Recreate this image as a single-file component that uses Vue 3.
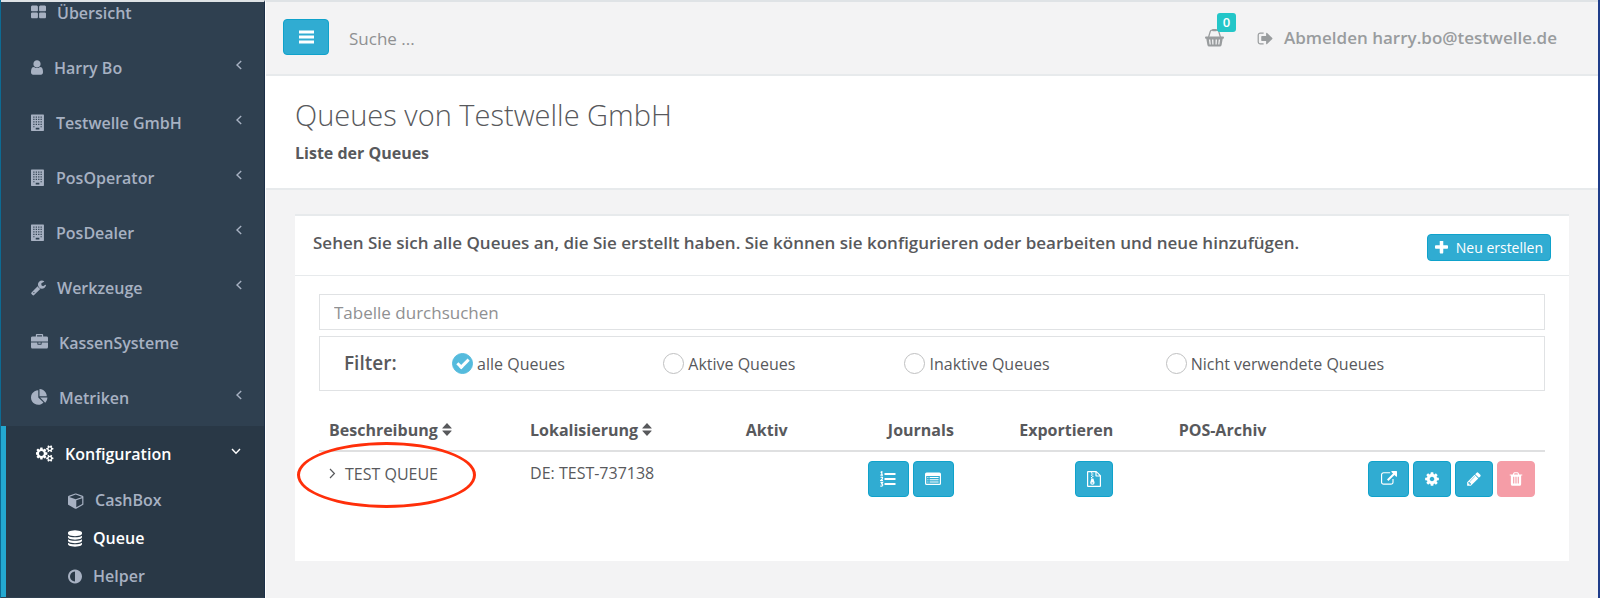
<script setup>
import { ref } from 'vue'

const icons = {
  grid: { w: 1664, x: 64, d: 'M832 1024v384q0 52-38 90t-90 38h-512q-52 0-90-38t-38-90v-384q0-52 38-90t90-38h512q52 0 90 38t38 90zm0-768v384q0 52-38 90t-90 38h-512q-52 0-90-38t-38-90v-384q0-52 38-90t90-38h512q52 0 90 38t38 90zm896 768v384q0 52-38 90t-90 38h-512q-52 0-90-38t-38-90v-384q0-52 38-90t90-38h512q52 0 90 38t38 90zm0-768v384q0 52-38 90t-90 38h-512q-52 0-90-38t-38-90v-384q0-52 38-90t90-38h512q52 0 90 38t38 90z' },
  user: { w: 1280, x: 256, d: 'M1536 1399q0 109-62.5 187t-150.5 78h-854q-88 0-150.5-78t-62.5-187q0-85 8.5-160.5t31.5-152 58.5-131 94-89 134.5-34.5q131 128 313 128t313-128q76 0 134.5 34.5t94 89 58.5 131 31.5 152 8.5 160.5zm-256-887q0 159-112.5 271.5t-271.5 112.5-271.5-112.5-112.5-271.5 112.5-271.5 271.5-112.5 271.5 112.5 112.5 271.5z' },
  building: { w: 1480, x: 0, d: 'M64 60H1304Q1368 60 1368 124V1728Q1368 1792 1304 1792H64Q0 1792 0 1728V124Q0 60 64 60ZM240 256v128h128v-128ZM500 256v128h128v-128ZM760 256v128h128v-128ZM1010 256v128h128v-128ZM240 512v128h128v-128ZM500 512v128h128v-128ZM760 512v128h128v-128ZM1010 512v128h128v-128ZM240 768v128h128v-128ZM500 768v128h128v-128ZM760 768v128h128v-128ZM1010 768v128h128v-128ZM240 1024v128h128v-128ZM500 1024v128h128v-128ZM760 1024v128h128v-128ZM1010 1024v128h128v-128ZM240 1280v128h128v-128ZM1010 1280v128h128v-128ZM500 1440v190h384v-190Z' },
  wrench: { w: 1664, x: 64, d: 'M448 1472q0-26-19-45t-45-19-45 19-19 45 19 45 45 19 45-19 19-45zm644-420l-682 682q-37 37-90 37-52 0-91-37l-106-108q-38-36-38-90 0-53 38-91l681-681q39 98 114.5 173.5t173.5 114.5zm634-435q0 39-23 106-47 134-164.5 217.5t-258.5 83.5q-185 0-316.5-131.5t-131.5-316.5 131.5-316.5 316.5-131.5q58 0 121.5 16.5t107.5 46.5q16 11 16 28t-16 28l-293 169v224l193 107q5-3 79-48.5t135.5-81 70.5-35.5q15 0 23.5 10t8.5 25z' },
  briefcase: { w: 1792, x: 0, d: 'M640 256h512v-128h-512v128zm1152 640v480q0 66-47 113t-113 47h-1472q-66 0-113-47t-47-113v-480h672v160q0 26 19 45t45 19h320q26 0 45-19t19-45v-160h672zm-768 0v128h-256v-128h256zm768-480v384h-1792v-384q0-66 47-113t113-47h352v-160q0-40 28-68t68-28h576q40 0 68 28t28 68v160h352q66 0 113 47t47 113z' },
  pie: { w: 1792, x: 0, d: 'M768 890l546 546q-106 108-247.5 168t-298.5 60q-209 0-385.5-103t-279.5-279.5-103-385.5 103-385.5 279.5-279.5 385.5-103v762zm187 6h773q0 157-60 298.5t-168 247.5zm709-128h-768v-768q209 0 385.5 103t279.5 279.5 103 385.5z' },
  cogs: { w: 1920, x: 0, d: 'M832 896q0-106-75-181t-181-75-181 75-75 181 75 181 181 75 181-75 75-181zm768 512q0-52-38-90t-90-38-90 38-38 90q0 53 37.5 90.5t90.5 37.5 90.5-37.5 37.5-90.5zm0-1024q0-52-38-90t-90-38-90 38-38 90q0 53 37.5 90.5t90.5 37.5 90.5-37.5 37.5-90.5zm-384 421v185q0 10-7 19.5t-16 10.5l-155 24q-11 35-32 76 34 48 90 115 7 11 7 20 0 12-7 19-23 30-82.5 89.5t-78.5 59.5q-11 0-21-7l-115-90q-37 19-77 31-11 108-23 155-7 24-30 24h-186q-11 0-20-7.5t-10-17.5l-23-153q-34-10-75-31l-118 89q-7 7-20 7-11 0-21-8-144-133-144-160 0-9 7-19 10-14 41-53t47-61q-23-44-35-82l-152-24q-10-1-17-9.5t-7-19.5v-185q0-10 7-19.5t16-10.5l155-24q11-35 32-76-34-48-90-115-7-11-7-20 0-12 7-20 22-30 82-89t79-59q11 0 21 7l115 90q34-18 77-32 11-108 23-154 7-24 30-24h186q11 0 20 7.5t10 17.5l23 153q34 10 75 31l118-89q8-7 20-7 11 0 21 8 144 133 144 160 0 8-7 19-12 16-42 54t-45 60q23 48 34 82l152 23q10 2 17 10.5t7 19.5zm640 533v140q0 16-149 31-12 27-30 52 51 113 51 138 0 4-4 7-122 71-124 71-8 0-46-47t-52-68q-20 2-30 2t-30-2q-14 21-52 68t-46 47q-2 0-124-71-4-3-4-7 0-25 51-138-18-25-30-52-149-15-149-31v-140q0-16 149-31 13-29 30-52-51-113-51-138 0-4 4-7 4-2 35-20t59-34 30-16q8 0 46 46.5t52 67.5q20-2 30-2t30 2q51-71 92-112l6-2q4 0 124 70 4 3 4 7 0 25-51 138 17 23 30 52 149 15 149 31zm0-1024v140q0 16-149 31-12 27-30 52 51 113 51 138 0 4-4 7-122 71-124 71-8 0-46-47t-52-68q-20 2-30 2t-30-2q-14 21-52 68t-46 47q-2 0-124-71-4-3-4-7 0-25 51-138-18-25-30-52-149-15-149-31v-140q0-16 149-31 13-29 30-52-51-113-51-138 0-4 4-7 4-2 35-20t59-34 30-16q8 0 46 46.5t52 67.5q20-2 30-2t30 2q51-71 92-112l6-2q4 0 124 70 4 3 4 7 0 25-51 138 17 23 30 52 149 15 149 31z' },
  cube: { w: 1728, x: 0, d: 'M896 1629l640-349v-636l-640 233v752zm-64-865l698-254-698-254-698 254zm832-252v768q0 35-18 65t-49 47l-704 384q-28 16-61 16t-61-16l-704-384q-31-17-49-47t-18-65v-768q0-40 23-73t61-47l704-256q22-8 44-8t44 8l704 256q38 14 61 47t23 73z' },
  database: { w: 1536, x: 128, d: 'M896 768q237 0 443-43t325-127v170q0 69-103 128t-280 93.5-385 34.5-385-34.5-280-93.5-103-128v-170q119 84 325 127t443 43zm0 768q237 0 443-43t325-127v170q0 69-103 128t-280 93.5-385 34.5-385-34.5-280-93.5-103-128v-170q119 84 325 127t443 43zm0-384q237 0 443-43t325-127v170q0 69-103 128t-280 93.5-385 34.5-385-34.5-280-93.5-103-128v-170q119 84 325 127t443 43zm0-1152q208 0 385 34.5t280 93.5 103 128v128q0 69-103 128t-280 93.5-385 34.5-385-34.5-280-93.5-103-128v-128q0-69 103-128t280-93.5 385-34.5z' },
  adjust: { w: 1536, x: 128, d: 'M896 1440v-1088q-148 0-273 73t-198 198-73 273 73 273 198 198 273 73zm768-544q0 209-103 385.5t-279.5 279.5-385.5 103-385.5-103-279.5-279.5-103-385.5 103-385.5 279.5-279.5 385.5-103 385.5 103 279.5 279.5 103 385.5z' },
}

const viewBox = (name) => `${icons[name].x} 0 ${icons[name].w} 1792`
const iconWidth = (name) => Math.floor((icons[name].w / 1792) * 17)

const nav = [
  { label: 'Übersicht', icon: 'grid', more: false },
  { label: 'Harry Bo', icon: 'user', more: true },
  { label: 'Testwelle GmbH', icon: 'building', more: true },
  { label: 'PosOperator', icon: 'building', more: true },
  { label: 'PosDealer', icon: 'building', more: true },
  { label: 'Werkzeuge', icon: 'wrench', more: true },
  { label: 'KassenSysteme', icon: 'briefcase', more: false },
  { label: 'Metriken', icon: 'pie', more: true },
]

const subNav = [
  { label: 'CashBox', icon: 'cube', active: false },
  { label: 'Queue', icon: 'database', active: true },
  { label: 'Helper', icon: 'adjust', active: false },
]

const filters = [
  { value: 'all', label: 'alle Queues' },
  { value: 'active', label: 'Aktive Queues' },
  { value: 'inactive', label: 'Inaktive Queues' },
  { value: 'unused', label: 'Nicht verwendete Queues' },
]
const filter = ref('all')
const globalSearch = ref('')
const tableSearch = ref('')
</script>

<template>
  <div class="app">
    <aside class="sidebar">
      <nav class="menu" aria-label="Hauptmenü">
        <a v-for="item in nav" :key="item.label" class="item" href="#">
          <svg class="item-icon" :width="iconWidth(item.icon)" height="17" :viewBox="viewBox(item.icon)" aria-hidden="true">
            <path :d="icons[item.icon].d" fill-rule="evenodd" />
          </svg>
          <span>{{ item.label }}</span>
          <svg v-if="item.more" class="arrow" width="8" height="10" viewBox="0 0 8 10" aria-hidden="true">
            <path d="M6.2 1 L2 5 L6.2 9" />
          </svg>
        </a>
        <div class="group">
          <a class="item current" href="#">
            <svg class="item-icon" :width="iconWidth('cogs')" height="17" :viewBox="viewBox('cogs')" aria-hidden="true">
              <path :d="icons.cogs.d" fill-rule="evenodd" />
            </svg>
            <span>Konfiguration</span>
            <svg class="arrow" width="10" height="8" viewBox="0 0 10 8" aria-hidden="true">
              <path d="M1 2 L5 6.2 L9 2" />
            </svg>
          </a>
          <a v-for="item in subNav" :key="item.label" class="sub-item" :class="{ current: item.active }" href="#">
            <svg class="item-icon" :width="iconWidth(item.icon)" height="17" :viewBox="viewBox(item.icon)" aria-hidden="true">
              <path :d="icons[item.icon].d" fill-rule="evenodd" />
            </svg>
            <span>{{ item.label }}</span>
          </a>
        </div>
      </nav>
    </aside>

    <div class="main">
      <header class="topbar">
        <button class="btn toggle" type="button" aria-label="Menü umschalten">
          <svg width="15" height="14" viewBox="0 0 15 14" aria-hidden="true">
            <path d="M0 .5h15v3H0zM0 5.5h15v3H0zM0 10.5h15v3H0z" />
          </svg>
        </button>
        <input v-model="globalSearch" class="global-search" type="text" placeholder="Suche ..." aria-label="Suche">
        <a class="basket" href="#" aria-label="Warenkorb">
          <svg width="19" height="18" viewBox="0 0 19 18" aria-hidden="true">
            <path d="M3.6 8 L5.2 2.6 Q5.6 1.2 7 1.2 H12 Q13.4 1.2 13.8 2.6 L15.4 8" fill="none" stroke="currentColor" stroke-width="1.3" />
            <rect x="7" y="0" width="5" height="2.2" rx="1" />
            <path fill-rule="evenodd" d="M1 7.6H18Q19 7.6 19 8.7T18 9.8H17.7L16.6 16Q16.3 17.6 14.8 17.6H4.2Q2.7 17.6 2.4 16L1.3 9.8H1Q0 9.8 0 8.7T1 7.6ZM3.9 10.6L4.6 15.4H5.8L5.3 10.6ZM7 10.6L7.3 15.4H8.5L8.4 10.6ZM10.6 10.6L10.5 15.4H11.7L12 10.6ZM13.7 10.6L13.2 15.4H14.4L15.1 10.6Z" />
          </svg>
          <span class="badge">0</span>
        </a>
        <a class="logout" href="#">
          <svg width="17" height="17" viewBox="64 0 1664 1792" aria-hidden="true">
            <path d="M704 1440q0 4 1 20t.5 26.5-3 23.5-10 19.5-20.5 6.5h-320q-119 0-203.5-84.5t-84.5-203.5v-704q0-119 84.5-203.5t203.5-84.5h320q13 0 22.5 9.5t9.5 22.5q0 4 1 20t.5 26.5-3 23.5-10 19.5-20.5 6.5h-320q-66 0-113 47t-47 113v704q0 66 47 113t113 47h312l11.5 1 11.5 3 8 5.5 7 9 2 13.5zm928-544q0 26-19 45l-544 544q-19 19-45 19t-45-19-19-45v-288h-448q-26 0-45-19t-19-45v-384q0-26 19-45t45-19h448v-288q0-26 19-45t45-19 45 19l544 544q19 19 19 45z" />
          </svg>
          <span>Abmelden harry.bo@testwelle.de</span>
        </a>
      </header>

      <div class="heading">
        <h1>Queues von Testwelle GmbH</h1>
        <strong>Liste der Queues</strong>
      </div>

      <main class="content">
        <section class="card">
          <div class="card-title">
            <h2>Sehen Sie sich alle Queues an, die Sie erstellt haben. Sie können sie konfigurieren oder bearbeiten und neue hinzufügen.</h2>
            <button class="btn create" type="button">
              <svg width="13" height="13" viewBox="192 192 1408 1408" aria-hidden="true">
                <path d="M1600 736v192q0 40-28 68t-68 28h-416v416q0 40-28 68t-68 28h-192q-40 0-68-28t-28-68v-416h-416q-40 0-68-28t-28-68v-192q0-40 28-68t68-28h416v-416q0-40 28-68t68-28h192q40 0 68 28t28 68v416h416q40 0 68 28t28 68z" />
              </svg>
              <span>Neu erstellen</span>
            </button>
          </div>
          <div class="card-body">
            <input v-model="tableSearch" class="table-search" type="text" placeholder="Tabelle durchsuchen" aria-label="Tabelle durchsuchen">
            <div class="filters" role="radiogroup" aria-labelledby="filter-title">
              <span id="filter-title" class="filter-title">Filter:</span>
              <label v-for="f in filters" :key="f.value" class="filter">
                <input v-model="filter" type="radio" name="queue-filter" :value="f.value">
                <span>{{ f.label }}</span>
              </label>
            </div>
            <table>
              <colgroup>
                <col class="c-name"><col class="c-loc"><col class="c-active"><col class="c-journals"><col class="c-export"><col class="c-pos"><col>
              </colgroup>
              <thead>
                <tr>
                  <th v-for="title in ['Beschreibung', 'Lokalisierung']" :key="title">
                    {{ title }}
                    <svg class="sort" width="10" height="13" viewBox="0 0 10 13" aria-hidden="true">
                      <path d="M5 0 L9.6 5 Q10 5.6 9.2 5.6 H.8 Q0 5.6 .4 5 ZM5 13 L9.6 8 Q10 7.4 9.2 7.4 H.8 Q0 7.4 .4 8 Z" />
                    </svg>
                  </th>
                  <th>Aktiv</th>
                  <th class="right">Journals</th>
                  <th class="right">Exportieren</th>
                  <th class="center">POS-Archiv</th>
                  <th></th>
                </tr>
              </thead>
              <tbody>
                <tr>
                  <td>
                    <span class="queue">
                      <svg width="7" height="11" viewBox="0 0 7 11" aria-hidden="true">
                        <path d="M1 1 L5.4 5.5 L1 10" fill="none" stroke="currentColor" stroke-width="1.2" />
                      </svg>
                      <span>TEST QUEUE</span>
                      <span class="marker"></span>
                    </span>
                  </td>
                  <td>DE: TEST-737138</td>
                  <td></td>
                  <td>
                    <div class="actions">
                      <button class="btn wide" type="button" aria-label="Journal">
                        <svg width="16" height="16" viewBox="0 0 16 16" aria-hidden="true">
                          <path d="M4.5 2h11v2h-11zM4.5 7h11v2h-11zM4.5 12h11v2h-11z" />
                          <path d="M.6 1.4 L1.8 .7 V4 M.4 4.2 H3 M.6 6.5 Q2.6 5.4 2.6 7 Q2.4 8 .8 9.4 H3 M.5 11.4 H2.6 L1.6 12.8 Q3 13 2.6 14.4 Q2 15.6 .4 14.9" fill="none" stroke="currentColor" stroke-width="1.2" />
                        </svg>
                      </button>
                      <button class="btn wide" type="button" aria-label="Liste">
                        <svg width="16" height="14" viewBox="0 0 16 14" aria-hidden="true">
                          <path fill-rule="evenodd" d="M1.6 .5H14.4Q16 .5 16 2.1V11.4Q16 13 14.4 13H1.6Q0 13 0 11.4V2.1Q0 .5 1.6 .5ZM1.2 4V11.3Q1.2 11.8 1.7 11.8H14.3Q14.8 11.8 14.8 11.3V4Z" />
                          <path d="M2.4 5h1v1h-1zM2.4 7.3h1v1h-1zM2.4 9.6h1v1h-1zM4.6 5h9v1h-9zM4.6 7.3h9v1h-9zM4.6 9.6h9v1h-9z" />
                        </svg>
                      </button>
                    </div>
                  </td>
                  <td>
                    <div class="actions">
                      <button class="btn" type="button" aria-label="Exportieren">
                        <svg width="14" height="16" viewBox="0 0 14 16" aria-hidden="true">
                          <path fill-rule="evenodd" d="M1 0H9.4L14 4.6V15Q14 16 13 16H1Q0 16 0 15V1Q0 0 1 0ZM1.2 1.2V14.8H12.8V5.6H9.2Q8.4 5.6 8.4 4.8V1.2ZM9.6 1.6V4.4H12.4Z" />
                          <path d="M4 1.2h1.2v1.2H4zM5.2 2.4h1.2v1.2H5.2zM4 3.6h1.2v1.2H4zM5.2 4.8h1.2V6H5.2zM4 6h1.2v1.2H4z" />
                          <path fill-rule="evenodd" d="M4.4 7.4H6.4L7.6 11.6Q7.8 13.8 5.4 13.8T3.2 11.6ZM4.6 11.4V12.5H6.2V11.4Z" />
                        </svg>
                      </button>
                    </div>
                  </td>
                  <td></td>
                  <td>
                    <div class="actions row-actions">
                      <button class="btn wide" type="button" aria-label="Öffnen">
                        <svg width="16" height="16" viewBox="0 0 1792 1792" aria-hidden="true">
                          <path d="M1408 928v320q0 119-84.5 203.5t-203.5 84.5h-832q-119 0-203.5-84.5t-84.5-203.5v-832q0-119 84.5-203.5t203.5-84.5h704q14 0 23 9t9 23v64q0 14-9 23t-23 9h-704q-66 0-113 47t-47 113v832q0 66 47 113t113 47h832q66 0 113-47t47-113v-320q0-14 9-23t23-9h64q14 0 23 9t9 23zm384-864v512q0 26-19 45t-45 19-45-19l-176-176-652 652q-10 10-23 10t-23-10l-114-114q-10-10-10-23t10-23l652-652-176-176q-19-19-19-45t19-45 45-19h512q26 0 45 19t19 45z" />
                        </svg>
                      </button>
                      <button class="btn" type="button" aria-label="Einstellungen">
                        <svg width="16" height="16" viewBox="0 0 1792 1792" aria-hidden="true">
                          <path d="M1152 896q0-106-75-181t-181-75-181 75-75 181 75 181 181 75 181-75 75-181zm512-109v222q0 12-8 23t-20 13l-185 28q-19 54-39 91 35 50 107 138 10 12 10 25t-9 23q-27 37-99 108t-94 71q-12 0-26-9l-138-108q-44 23-91 38-16 136-29 186-7 28-36 28h-222q-14 0-24.5-8.5t-11.5-21.5l-28-184q-49-16-90-37l-141 107q-10 9-25 9-14 0-25-11-126-114-165-168-7-10-7-23 0-12 8-23 15-21 51-66.5t54-70.5q-27-50-41-99l-183-27q-13-2-21-12.5t-8-23.5v-222q0-12 8-23t19-13l186-28q14-46 39-92-40-57-107-138-10-12-10-24 0-10 9-23 26-36 98.5-107.5t94.5-71.5q13 0 26 10l138 107q44-23 91-38 16-136 29-186 7-28 36-28h222q14 0 24.5 8.5t11.5 21.5l28 184q49 16 90 37l142-107q9-9 24-9 13 0 25 10 129 119 165 170 7 8 7 22 0 12-8 23-15 21-51 66.5t-54 70.5q26 50 41 98l183 28q13 2 21 12.5t8 23.5z" />
                        </svg>
                      </button>
                      <button class="btn" type="button" aria-label="Bearbeiten">
                        <svg width="16" height="16" viewBox="0 0 1792 1792" aria-hidden="true">
                          <path d="M491 1536l91-91-235-235-91 91v107h128v128h107zm523-928q0-22-22-22-10 0-17 7l-542 542q-7 7-7 17 0 22 22 22 10 0 17-7l542-542q7-7 7-17zm-54-192l416 416-832 832h-416v-416zm683 96q0 53-37 90l-166 166-416-416 166-165q36-38 90-38 53 0 91 38l235 234q37 39 37 91z" />
                        </svg>
                      </button>
                      <button class="btn danger" type="button" aria-label="Löschen">
                        <svg width="16" height="16" viewBox="0 0 1792 1792" aria-hidden="true">
                          <path d="M704 1376v-704q0-14-9-23t-23-9h-64q-14 0-23 9t-9 23v704q0 14 9 23t23 9h64q14 0 23-9t9-23zm256 0v-704q0-14-9-23t-23-9h-64q-14 0-23 9t-9 23v704q0 14 9 23t23 9h64q14 0 23-9t9-23zm256 0v-704q0-14-9-23t-23-9h-64q-14 0-23 9t-9 23v704q0 14 9 23t23 9h64q14 0 23-9t9-23zm-544-992h448l-48-117q-7-9-17-11h-317q-10 2-17 11zm928 32v64q0 14-9 23t-23 9h-96v948q0 83-47 143.5t-113 60.5h-832q-66 0-113-58.5t-47-141.5v-952h-96q-14 0-23-9t-9-23v-64q0-14 9-23t23-9h309l70-167q15-37 54-63t79-26h320q40 0 79 26t54 63l70 167h309q14 0 23 9t9 23z" />
                        </svg>
                      </button>
                    </div>
                  </td>
                </tr>
              </tbody>
            </table>
          </div>
        </section>
      </main>
    </div>
  </div>
</template>

<style>
body {
  margin: 0;
  background: #f3f3f4;
}
</style>

<style scoped>
.app {
  display: flex;
  box-sizing: border-box;
  min-height: 100vh;
  border-left: 1px solid #0d6b93;
  border-right: 2px solid #1f3d8a;
  background: #f3f3f4;
  color: #58595c;
  font-family: "Open Sans", "Noto Sans", sans-serif;
  font-size: 16px;
  line-height: 24px;
}
svg {
  flex: none;
  fill: currentColor;
}
a {
  color: inherit;
  text-decoration: none;
}
input,
button {
  font: inherit;
}

.sidebar {
  flex: none;
  box-sizing: border-box;
  width: 264px;
  overflow: hidden;
  border-top: 2px solid #dfe3e6;
  border-right: 1px solid #1c2f47;
  background: #2f4050;
}
.menu {
  margin-top: -17px;
}
.item,
.sub-item {
  display: flex;
  align-items: center;
  gap: 11px;
  box-sizing: border-box;
  color: #a7b1c2;
  font-weight: 600;
}
.item {
  height: 55px;
  padding: 0 21px 0 30px;
}
.sub-item {
  height: 38px;
  padding-left: 62px;
}
.group {
  margin-top: 1px;
  padding-bottom: 2px;
  border-left: 5px solid #23a8d0;
  background: #293846;
}
.group .item {
  padding-right: 23px;
}
.current {
  color: #fff;
}
.arrow {
  margin: 0 0 6px auto;
  fill: none;
  stroke: currentColor;
  stroke-width: 1.4;
}

.main {
  flex: 1;
  min-width: 0;
  border-top: 2px solid #dfe3e6;
  border-left: 1px solid #fff;
}
.topbar {
  display: flex;
  align-items: center;
  box-sizing: border-box;
  height: 74px;
  padding: 0 41px 2px 17px;
  border-bottom: 2px solid #e7eaec;
  color: #999c9e;
  font-weight: 600;
}
.btn {
  display: inline-flex;
  align-items: center;
  justify-content: center;
  box-sizing: border-box;
  width: 38px;
  height: 36px;
  padding: 0;
  border: 1px solid #0fa2cb;
  border-radius: 4px;
  background: #30acd2;
  color: #fff;
}
.btn.wide {
  width: 41px;
}
.btn.toggle {
  width: 46px;
}
.btn.danger {
  border-color: #f59da7;
  background: #f59da7;
}
.global-search {
  flex: 1;
  min-width: 0;
  margin: 0 20px;
  padding: 4px 0 0;
  border: 0;
  outline: 0;
  background: transparent;
  color: #58595c;
  font-size: 17px;
  font-weight: 400;
}
.global-search::placeholder,
.table-search::placeholder {
  color: #8f9092;
  opacity: 1;
}
.basket {
  position: relative;
  display: flex;
  margin-right: 33px;
  padding-top: 2px;
}
.badge {
  position: absolute;
  left: 12px;
  bottom: 15px;
  width: 19px;
  height: 19px;
  border-radius: 3px;
  background: #23c6c8;
  color: #fff;
  font-size: 13px;
  line-height: 19px;
  text-align: center;
}
.logout {
  display: flex;
  align-items: center;
  gap: 10px;
  padding-top: 2px;
  font-size: 17px;
}

.heading {
  padding: 19px 29px 23px;
  border-bottom: 2px solid #e7eaec;
  background: #fff;
}
.heading h1 {
  margin: 0 0 6px;
  font-size: 29px;
  font-weight: 300;
  line-height: 40px;
}
.heading strong {
  display: block;
  font-weight: 700;
}

.content {
  padding: 24px 29px 36px;
}
.card {
  border-top: 2px solid #e7eaec;
  background: #fff;
}
.card-title {
  display: flex;
  align-items: flex-start;
  justify-content: space-between;
  box-sizing: border-box;
  min-height: 60px;
  padding: 15px 18px 0;
  border-bottom: 1px solid #e7eaec;
}
.card-title h2 {
  margin: 0;
  font-size: 17px;
  font-weight: 600;
  line-height: 24px;
}
.btn.create {
  flex: none;
  gap: 8px;
  width: auto;
  height: 27px;
  margin-top: 3px;
  padding: 0 7px;
  font-size: 14px;
}
.card-body {
  padding: 18px 24px 64px;
}
.table-search {
  display: block;
  box-sizing: border-box;
  width: 100%;
  height: 36px;
  padding: 0 14px;
  border: 1px solid #e0e2e4;
  outline: 0;
  background: #fff;
  color: #58595c;
  font-size: 17px;
}
.filters {
  display: grid;
  grid-template-columns: 108fr 211fr 241fr 261fr 378fr;
  align-items: center;
  box-sizing: border-box;
  height: 55px;
  margin-top: 6px;
  padding-left: 24px;
  border: 1px solid #e0e2e4;
}
.filter-title {
  padding-bottom: 2px;
  font-size: 19px;
  font-weight: 600;
}
.filter {
  display: flex;
  align-items: center;
  gap: 4px;
}
.filter input {
  position: relative;
  flex: none;
  appearance: none;
  box-sizing: border-box;
  width: 21px;
  height: 21px;
  margin: 0;
  border: 1px solid #bfc0c1;
  border-radius: 50%;
  background: #fff;
}
.filter input:checked {
  border-color: #55bbdd;
  background: #55bbdd;
}
.filter input:checked::after {
  content: "";
  position: absolute;
  left: 4px;
  top: 5px;
  width: 9px;
  height: 4px;
  border: solid #fff;
  border-width: 0 0 3px 3px;
  transform: rotate(-45deg);
}

table {
  width: 100%;
  margin-top: 21px;
  border-collapse: collapse;
  table-layout: fixed;
}
.c-name { width: 16.4%; }
.c-loc { width: 17.6%; }
.c-active { width: 9.2%; }
.c-journals { width: 9.4%; }
.c-export { width: 13%; }
.c-pos { width: 16.2%; }
th {
  padding: 6px 10px 8px;
  border-bottom: 2px solid #dfe0e1;
  font-weight: 700;
  text-align: left;
  white-space: nowrap;
}
th.right {
  text-align: right;
}
th.center {
  text-align: center;
}
td {
  padding: 9px 10px 0;
  vertical-align: top;
}
.queue {
  position: relative;
  display: inline-flex;
  align-items: center;
  gap: 9px;
}
.marker {
  position: absolute;
  inset: -20px -38px -22px -32px;
  border: 3px solid #ff2f0a;
  border-radius: 50%;
  pointer-events: none;
}
.actions {
  display: flex;
  justify-content: flex-end;
  gap: 4px;
}
</style>
